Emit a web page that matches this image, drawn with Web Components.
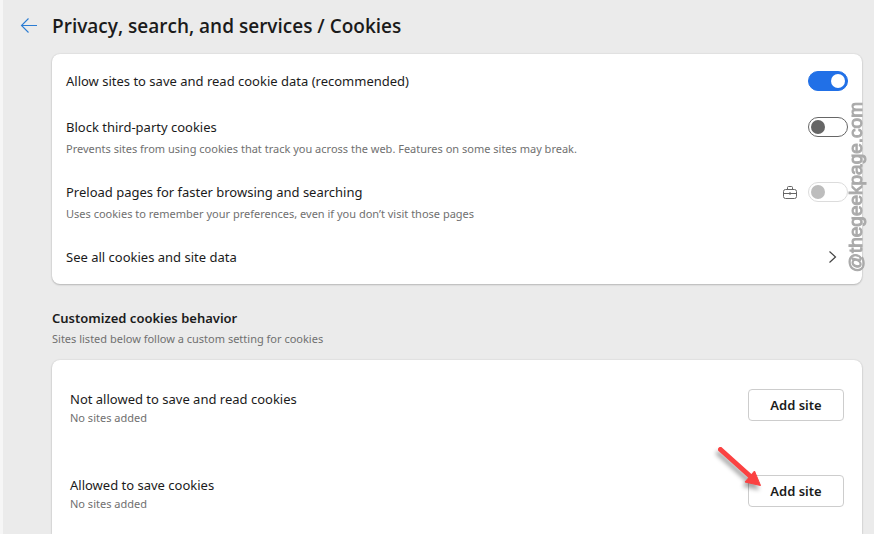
<!DOCTYPE html>
<html lang="en">
<head>
<meta charset="utf-8">
<title>Privacy, search, and services / Cookies</title>
<style>
  html, body { margin: 0; height: 100%; }
  body {
    background: #ebebeb;
    color: #1b1b1b;
    font: 13px/20px "Noto Sans", "Open Sans", sans-serif;
    overflow: hidden;
  }
</style>
</head>
<body>
<cookies-page></cookies-page>

<script>
const define = (name, html, setup) => {
  const template = document.createElement('template');
  template.innerHTML = html;
  customElements.define(name, class extends HTMLElement {
    constructor() {
      super();
      this.attachShadow({ mode: 'open' }).append(template.content.cloneNode(true));
    }
    connectedCallback() {
      if (setup) setup(this, this.shadowRoot);
    }
  });
};

define('settings-card', `
  <style>
    :host {
      display: block;
      padding: 4px 0;
      background: #fff;
      border-radius: 8px;
      box-shadow: 0 1px 2px rgba(0,0,0,.2), 0 0 2px rgba(0,0,0,.12);
    }
    :host([open-ended]) { flex: 1; padding: 0; border-radius: 8px 8px 0 0; }
  </style>
  <slot></slot>`);

define('toggle-row', `
  <style>
    :host { display: flex; align-items: flex-start; gap: 10px; padding: 13px 14px; }
    :host([detail]) { padding-bottom: 10px; }
    .text { flex: 1; min-width: 0; }
    label { display: block; }
    p { margin: 2px 0 0; font-size: 11px; color: #707070; }
    p:empty { display: none; }
    input {
      appearance: none;
      box-sizing: border-box;
      flex: none;
      display: flex;
      align-items: center;
      width: 40px; height: 20px;
      margin: 0; padding: 0 2px;
      border: 1px solid #666;
      border-radius: 10px;
      background: #fff;
    }
    input::before {
      content: "";
      width: 14px; height: 14px;
      border-radius: 50%;
      background: #666;
    }
    input:checked { justify-content: flex-end; background: #2170e7; border-color: #2170e7; }
    input:checked::before { background: #fff; }
    input:disabled { border-color: #dcdcdc; }
    input:disabled::before { background: #bdbdbd; }
  </style>
  <div class="text"><label for="t"></label><p id="d"></p></div>
  <slot></slot>
  <input id="t" type="checkbox" role="switch" aria-describedby="d">`,
  (el, root) => {
    root.querySelector('label').textContent = el.getAttribute('label');
    root.querySelector('p').textContent = el.getAttribute('detail') || '';
    const input = root.querySelector('input');
    input.checked = el.hasAttribute('checked');
    input.disabled = el.hasAttribute('disabled');
  });

define('managed-icon', `
  <style>:host { display: block; width: 16px; height: 20px; } svg { display: block; margin-top: 3px; }</style>
  <svg width="16" height="16" viewBox="0 0 16 16" fill="none" stroke="#666" role="img" aria-label="Managed">
    <rect x="1.5" y="4.5" width="13" height="9" rx="2"/>
    <path d="M5.500 4.500V2.500a1 1 0 0 1 1-1h3a1 1 0 0 1 1 1V4.500M2 8.500h12M8 7v3"/>
  </svg>`);

define('link-row', `
  <style>
    a { display: flex; align-items: center; padding: 13px 14px; color: inherit; text-decoration: none; }
    :host { display: block; }
    span { flex: 1; }
    svg { margin-right: 8px; }
  </style>
  <a href="#site-data"><span><slot></slot></span>
    <svg width="16" height="16" viewBox="0 0 16 16" fill="none" stroke="#444" stroke-width="1.2" aria-hidden="true"><path d="M5.500 2.500 11.500 8l-6 5.500"/></svg>
  </a>`);

define('site-list-row', `
  <style>
    :host { display: flex; align-items: flex-start; padding: 29px 18px 19px; }
    .text { flex: 1; min-width: 0; }
    p { margin: 0; font-size: 11px; line-height: 18px; color: #707070; }
    button {
      box-sizing: border-box;
      min-width: 96px; height: 32px;
      padding: 0 20px;
      border: 1px solid #cdcdcd;
      border-radius: 4px;
      background: #fff;
      color: inherit;
      font: 600 13px/20px "Noto Sans", "Open Sans", sans-serif;
    }
  </style>
  <div class="text"><div id="n"><slot></slot></div><p>No sites added</p></div>
  <button id="b" type="button" aria-labelledby="b n">Add site</button>`);

define('pointer-arrow', `
  <style>
    :host { position: absolute; left: -36px; top: -34px; width: 56px; height: 56px; pointer-events: none; }
    svg { display: block; filter: drop-shadow(-2px 4px 2px rgba(0,0,0,.35)); }
  </style>
  <svg width="56" height="56" viewBox="0 0 56 56" aria-hidden="true">
    <path d="M8.500 8.500 38 35" stroke="#fb4242" stroke-width="5" stroke-linecap="round"/>
    <path d="M48.500 44.500 33 41 42.500 30Z" fill="#fb4242" stroke="#fb4242"/>
  </svg>`);

define('side-credit', `
  <style>
    :host {
      position: absolute; right: 8px; top: 102px;
      writing-mode: vertical-rl;
      transform: rotate(180deg);
      font: 19px/20px "Liberation Sans", Arial, sans-serif;
      color: #aaa;
      -webkit-text-stroke: 1px #aaa;
      pointer-events: none;
      white-space: nowrap;
    }
  </style>
  <slot></slot>`);

define('cookies-page', `
  <style>
    :host {
      box-sizing: border-box;
      display: flex;
      flex-direction: column;
      position: relative;
      min-height: 100vh;
      padding: 10px 12px 0 17px;
      border-left: 3px solid #f6f6f6;
    }
    header { display: flex; align-items: center; height: 32px; margin-bottom: 12px; }
    header a { display: flex; width: 32px; }
    h1 { margin: 0; font: 600 19px/32px "Open Sans", "Noto Sans", sans-serif; }
    main { flex: 1; display: flex; flex-direction: column; margin-left: 32px; }
    h2 { margin: 24px 0 0; font-size: 13px; line-height: 20px; font-weight: 600; }
    main > p { margin: 1px 0 11px; font-size: 11px; color: #707070; }
    .marked { position: relative; display: block; }
    .anchor { position: absolute; right: 114px; top: 29px; width: 0; }
  </style>
  <header>
    <a href="#back" aria-label="Back">
      <svg width="18" height="16" viewBox="0 0 18 16" fill="none" stroke="#2b7cd3" stroke-width="1.1" aria-hidden="true"><path d="M17 7.500H1.500M8.500 .5 1.500 7.500l7 7"/></svg>
    </a>
    <h1>Privacy, search, and services / Cookies</h1>
  </header>
  <main>
    <settings-card>
      <toggle-row label="Allow sites to save and read cookie data (recommended)" checked></toggle-row>
      <toggle-row label="Block third-party cookies" detail="Prevents sites from using cookies that track you across the web. Features on some sites may break."></toggle-row>
      <toggle-row label="Preload pages for faster browsing and searching" detail="Uses cookies to remember your preferences, even if you don’t visit those pages" disabled><managed-icon></managed-icon></toggle-row>
      <link-row>See all cookies and site data</link-row>
    </settings-card>
    <h2>Customized cookies behavior</h2>
    <p>Sites listed below follow a custom setting for cookies</p>
    <settings-card open-ended>
      <site-list-row>Not allowed to save and read cookies</site-list-row>
      <div class="marked">
        <site-list-row>Allowed to save cookies</site-list-row>
        <div class="anchor"><pointer-arrow></pointer-arrow></div>
      </div>
    </settings-card>
  </main>
  <side-credit>@thegeekpage.com</side-credit>`);
</script>
</body>
</html>
